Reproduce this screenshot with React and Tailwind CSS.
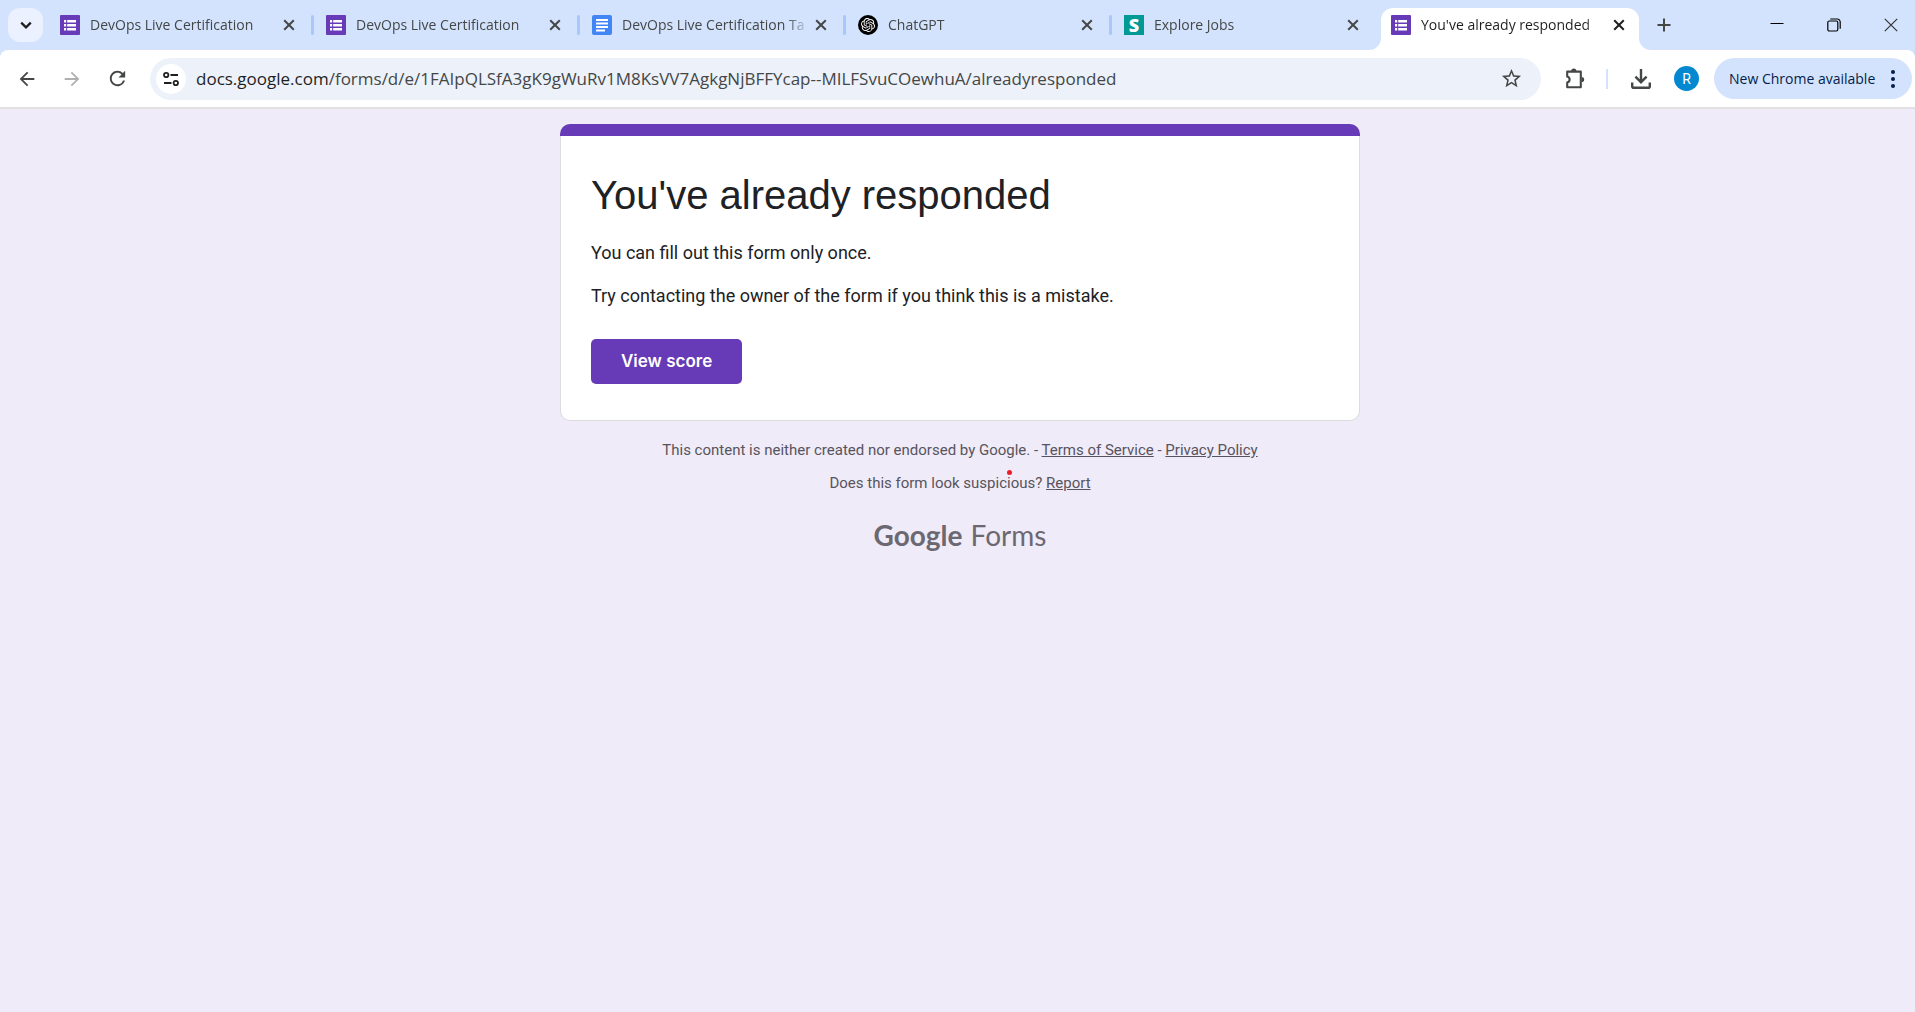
import React from "react";
import { MdArrowBack, MdArrowForward, MdRefresh, MdStarOutline } from "react-icons/md";
import { SiOpenai } from "react-icons/si";

function FormsIcon() {
  return (
    <svg className="size-5 shrink-0" viewBox="0 0 20 20" aria-hidden="true">
      <rect width="20" height="20" rx="1" fill="#673ab7" />
      <path d="M4 5h2.2v2.5H4zM4 9h2.2v2.5H4zM4 13h2.2v2.5H4zM7.2 5H16v2.5H7.2zM7.2 9H16v2.5H7.2zM7.2 13H16v2.5H7.2z" fill="#fff" />
    </svg>
  );
}

function DocsIcon() {
  return (
    <svg className="size-5 shrink-0" viewBox="0 0 20 20" aria-hidden="true">
      <rect width="20" height="20" rx="2" fill="#4285f4" />
      <path d="M4 4h12v2H4zM4 7.5h12v2H4zM4 11h12v2H4zM4 14.5h9v2H4z" fill="#fff" />
    </svg>
  );
}

function ChatIcon() {
  return (
    <span className="flex size-5 shrink-0 items-center justify-center rounded-full bg-black text-white">
      <SiOpenai className="size-3.5" />
    </span>
  );
}

function JobsIcon() {
  return (
    <span className="flex size-5 shrink-0 items-center justify-center bg-[#009a96] font-['Open_Sans',sans-serif] text-lg leading-5 font-extrabold text-white">
      S
    </span>
  );
}

function Cross() {
  return (
    <svg className="size-3" viewBox="0 0 12 12" fill="none" stroke="currentColor" strokeWidth="2" aria-hidden="true">
      <path d="M1.2 1.2l9.6 9.6M10.8 1.2l-9.6 9.6" />
    </svg>
  );
}

const tabs = [
  { title: "DevOps Live Certification", Icon: FormsIcon },
  { title: "DevOps Live Certification", Icon: FormsIcon },
  { title: "DevOps Live Certification Ta", Icon: DocsIcon },
  { title: "ChatGPT", Icon: ChatIcon },
  { title: "Explore Jobs", Icon: JobsIcon },
];

function TabBody({ title, Icon }) {
  return (
    <>
      <button className="flex min-w-0 flex-1 items-center gap-2.5">
        <Icon />
        <span className="min-w-0 flex-1 overflow-hidden mask-r-from-88% text-left text-sm leading-5 whitespace-nowrap">{title}</span>
      </button>
      <button aria-label={`Close ${title}`} className="flex size-6 shrink-0 items-center justify-center">
        <Cross />
      </button>
    </>
  );
}

function TabStrip() {
  return (
    <div className="flex h-[50px] bg-[#d3e3fd] pl-2 text-[#444746]">
      <button aria-label="Search tabs" className="mt-2 flex h-[34px] w-[35px] shrink-0 items-center justify-center rounded-xl bg-[#ebf1fe] text-[#1f1f1f]">
        <svg className="size-3" viewBox="0 0 12 12" fill="none" stroke="currentColor" strokeWidth="2.2" aria-hidden="true">
          <path d="M1.2 3.6L6 8.4l4.8-4.8" />
        </svg>
      </button>
      <div className="ml-[5px] flex min-w-0">
        {tabs.map((tab, i) => (
          <div key={i} className="flex w-[266px] min-w-0 items-center pl-3">
            <TabBody {...tab} />
            <span className={i < 4 ? "ml-2.5 h-5 w-[3px] shrink-0 rounded-full bg-[#a8c7fa]" : "ml-2.5 w-[3px] shrink-0"} />
          </div>
        ))}
        <div className="relative mt-2 ml-[3px] flex w-[258px] min-w-0 items-center rounded-t-xl bg-white pr-2 pb-2 pl-2.5 text-[#1f1f1f]">
          <svg className="absolute bottom-0 -left-3 size-3" viewBox="0 0 12 12" aria-hidden="true">
            <path d="M12 0v12H0A12 12 0 0 0 12 0z" fill="#fff" />
          </svg>
          <TabBody title="You've already responded" Icon={FormsIcon} />
          <svg className="absolute -right-3 bottom-0 size-3" viewBox="0 0 12 12" aria-hidden="true">
            <path d="M0 0v12h12A12 12 0 0 1 0 0z" fill="#fff" />
          </svg>
        </div>
      </div>
      <button aria-label="New tab" className="ml-3 flex w-[26px] shrink-0 items-center justify-center">
        <svg className="size-[14px]" viewBox="0 0 14 14" fill="none" stroke="currentColor" strokeWidth="2" aria-hidden="true">
          <path d="M7 .5v13M.5 7h13" />
        </svg>
      </button>
      <div className="ml-auto flex shrink-0 text-black">
        <button aria-label="Minimize" className="flex w-[46px] items-center justify-center">
          <svg className="size-[14px]" viewBox="0 0 14 14" fill="none" stroke="currentColor" aria-hidden="true">
            <path d="M.5 5.5h13" />
          </svg>
        </button>
        <button aria-label="Restore" className="flex w-[67px] items-center justify-center">
          <svg className="size-[14px]" viewBox="0 0 14 14" fill="none" stroke="currentColor" strokeWidth="1.2" aria-hidden="true">
            <rect x=".8" y="3" width="10" height="10" rx="1.5" />
            <path d="M3.2 1h7a3 3 0 0 1 3 3v6.8" />
          </svg>
        </button>
        <button aria-label="Close window" className="flex w-12 items-center justify-center text-[#333333]">
          <svg className="size-[14px] shrink-0" viewBox="0 0 14 14" fill="none" stroke="currentColor" strokeWidth="1.2" aria-hidden="true">
            <path d="M.8.8l12.4 12.4M13.2.8L.8 13.2" />
          </svg>
        </button>
      </div>
    </div>
  );
}

function Toolbar() {
  return (
    <div className="bg-[#d3e3fd]">
      <div className="flex h-[59px] items-center rounded-t-lg border-b-2 border-[#e1e1e3] bg-white pr-[3px] pl-[7px] text-[#444746]">
        <button aria-label="Back" className="flex size-10 shrink-0 items-center justify-center"><MdArrowBack className="size-[22px]" /></button>
        <button aria-label="Forward" className="ml-[5px] flex size-10 shrink-0 items-center justify-center text-[#b0b0b0]"><MdArrowForward className="size-[22px]" /></button>
        <button aria-label="Reload" className="ml-[5px] flex size-10 shrink-0 items-center justify-center"><MdRefresh className="size-[23px]" /></button>
        <div className="ml-[13px] flex h-[42px] min-w-0 flex-1 items-center rounded-full bg-[#ecf1fa] pr-[18px] pl-1.5">
          <button aria-label="View site information" className="flex size-[30px] shrink-0 items-center justify-center rounded-full bg-white text-[#1f1f1f]">
            <svg className="size-4" viewBox="0 0 16 16" fill="none" stroke="currentColor" strokeWidth="1.8" aria-hidden="true">
              <circle cx="3.2" cy="4" r="2.2" />
              <path d="M7.5 4H15M1 12h7.5" />
              <circle cx="12.8" cy="12" r="2.2" />
            </svg>
          </button>
          <div className="ml-2.5 min-w-0 flex-1 overflow-hidden text-[17px] leading-6 whitespace-nowrap">
            <span className="text-[#1f1f1f]">docs.google.com</span>/forms/d/e/1FAIpQLSfA3gK9gWuRv1M8KsVV7AgkgNjBFFYcap--MILFSvuCOewhuA/alreadyresponded
          </div>
          <button aria-label="Bookmark this tab" className="shrink-0"><MdStarOutline className="size-[23px]" /></button>
        </div>
        <button aria-label="Extensions" className="ml-[23px] shrink-0">
          <svg className="size-[22px]" viewBox="0 0 22 22" aria-hidden="true">
            <path d="M3.2 3.6h13.6v15.6H3.2v-4.6a3.2 3.2 0 0 0 0-6.2z" fill="none" stroke="currentColor" strokeWidth="2.1" strokeLinejoin="round" />
            <path d="M7.2 3a2.6 2.6 0 0 1 5.2 0zM17.6 8.9a2.6 2.6 0 0 1 0 5.2z" fill="currentColor" />
          </svg>
        </button>
        <span className="ml-5 h-5 w-[2px] shrink-0 bg-[#d3e3fd]" />
        <button aria-label="Downloads" className="ml-[22px] shrink-0">
          <svg className="size-[22px]" viewBox="0 0 22 22" fill="none" stroke="currentColor" strokeWidth="2.4" aria-hidden="true">
            <path d="M11 1v13M5.4 8.6L11 14.2l5.6-5.6M2.2 14.6v3.6q0 1.6 1.6 1.6h14.4q1.6 0 1.6-1.6v-3.6" />
          </svg>
        </button>
        <button aria-label="Profile R" className="ml-[22px] flex size-[25px] shrink-0 items-center justify-center rounded-full bg-[#0288d1] font-[Roboto,sans-serif] text-sm text-white">R</button>
        <button className="ml-[15px] flex h-[41px] w-[198px] shrink-0 items-center justify-between rounded-full bg-[#d3e3fd] pr-[17px] pl-[15px] text-sm whitespace-nowrap text-[#041e49]">
          New Chrome available
          <svg className="h-[18px] w-1" viewBox="0 0 4 18" fill="currentColor" aria-hidden="true">
            <circle cx="2" cy="2" r="2" /><circle cx="2" cy="9" r="2" /><circle cx="2" cy="16" r="2" />
          </svg>
        </button>
      </div>
    </div>
  );
}

export default function App() {
  return (
    <div className="flex min-h-screen flex-col bg-[#f0ebf8] font-['Open_Sans','Noto_Sans',sans-serif]">
      <TabStrip />
      <Toolbar />
      <main className="flex flex-col items-center pt-[15px] pl-[5px] font-[Roboto,sans-serif]">
        <section className="w-full max-w-[800px]">
          <div className="h-3 rounded-t-[10px] bg-[#673ab7]" />
          <div className="rounded-b-[10px] border border-t-0 border-[#dadce0] bg-white px-[30px] pt-[34px] pb-[36px] text-[#202124]">
            <h1 className="font-['Liberation_Sans',sans-serif] text-[40px] leading-[50px]">You've already responded</h1>
            <p className="mt-[21px] text-lg leading-6">You can fill out this form only once.</p>
            <p className="mt-[19px] text-lg leading-6">Try contacting the owner of the form if you think this is a mistake.</p>
            <a href="#score" className="mt-[31px] flex h-[45px] w-fit items-center rounded-[5px] bg-[#673ab7] px-[30px] font-[Inter,sans-serif] text-[17px] font-semibold text-white">View score</a>
          </div>
        </section>
        <p className="mt-[17px] text-[15px] leading-6 text-[#57545d]">
          This content is neither created nor endorsed by Google. - <a href="#terms" className="underline">Terms of Service</a> - <a href="#privacy" className="underline">Privacy Policy</a>
        </p>
        <p className="mt-[9px] text-[15px] leading-6 text-[#57545d]">
          Does this form look suspic<span className="relative">i<span className="absolute -top-1 left-0 size-[5px] rounded-full bg-[#ee1c25]" /></span>ous? <a href="#report" className="underline">Report</a>
        </p>
        <a href="#forms" aria-label="Google Forms" className="mt-5 flex items-baseline gap-2 font-[Lato,sans-serif] text-[28px] leading-10 text-[#6c6871]">
          <span className="font-bold">Google</span>
          <span>Forms</span>
        </a>
      </main>
    </div>
  );
}
